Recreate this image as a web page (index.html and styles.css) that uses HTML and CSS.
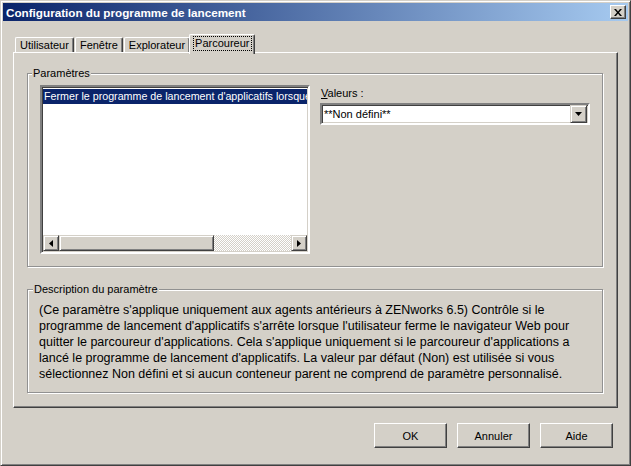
FILE: index.html
```html
<!DOCTYPE html>
<html lang="fr">
<head>
  <meta charset="UTF-8" />
  <title>Configuration du programme de lancement</title>
  <link rel="stylesheet" href="styles.css">
</head>
<body>
  <div class="window">
    <div class="titlebar">
      <span class="title">Configuration du programme de lancement</span>
      <span class="close">
        <svg width="8" height="7" viewBox="0 0 8 7"><path d="M0 0h2l2 2.5L6 0h2L5 3.5 8 7H6L4 4.5 2 7H0l3-3.5z" fill="#000"/></svg>
      </span>
    </div>

    <div class="client">
      <div class="tabs">
        <div class="tab">Utilisateur</div>
        <div class="tab">Fenêtre</div>
        <div class="tab">Explorateur</div>
        <div class="tab active"><span class="focus">Parcoureur</span></div>
      </div>

      <div class="panel">
        <fieldset class="group params">
          <legend>Paramètres</legend>
          <div class="params-row">
            <div class="listbox">
              <div class="list-items">
                <div class="item selected">Fermer le programme de lancement d'applicatifs lorsque</div>
              </div>
              <div class="hscroll">
                <span class="sbtn"><svg width="4" height="7" viewBox="0 0 4 7"><path d="M4 0v7L0 3.5z" fill="#000"/></svg></span>
                <span class="thumb"></span>
                <span class="track"></span>
                <span class="sbtn"><svg width="4" height="7" viewBox="0 0 4 7"><path d="M0 0v7l4-3.5z" fill="#000"/></svg></span>
              </div>
            </div>
            <div class="values">
              <label class="values-label">Valeurs :</label>
              <div class="combo">
                <span class="combo-text">**Non défini**</span>
                <span class="drop"><svg width="7" height="4" viewBox="0 0 7 4"><path d="M0 0h7L3.5 4z" fill="#000"/></svg></span>
              </div>
            </div>
          </div>
        </fieldset>

        <fieldset class="group desc">
          <legend>Description du paramètre</legend>
          <p class="desc-text">(Ce paramètre s'applique uniquement aux agents antérieurs à ZENworks 6.5) Contrôle si le<br>programme de lancement d'applicatifs s'arrête lorsque l'utilisateur ferme le navigateur Web pour<br>quitter le parcoureur d'applications. Cela s'applique uniquement si le parcoureur d'applications a<br>lancé le programme de lancement d'applicatifs. La valeur par défaut (Non) est utilisée si vous<br>sélectionnez Non défini et si aucun conteneur parent ne comprend de paramètre personnalisé.</p>
        </fieldset>
      </div>

      <div class="buttons">
        <button class="btn">OK</button>
        <button class="btn">Annuler</button>
        <button class="btn">Aide</button>
      </div>
    </div>
  </div>
</body>
</html>
```

FILE: styles.css
```css
body {
  margin: 0;
  background: #d4d0c8;
  font-family: "Liberation Sans", Arial, sans-serif;
  font-size: 11px;
  color: #000;
}
.window {
  width: 631px;
  height: 466px;
  box-sizing: border-box;
  border: 1px solid;
  border-color: #d4d0c8 #404040 #404040 #d4d0c8;
  box-shadow: inset 1px 1px #fff, inset -1px -1px #808080;
  padding: 2px;
  background: #d4d0c8;
}
.titlebar {
  height: 18px;
  display: flex;
  align-items: center;
  justify-content: space-between;
  padding: 0 2px 0 3px;
  background: linear-gradient(90deg, #0a246a, #a6caf0);
}
.title {
  color: #fff;
  font-weight: bold;
  font-size: 11.7px;
}
.close {
  width: 16px;
  height: 14px;
  box-sizing: border-box;
  display: flex;
  align-items: center;
  justify-content: center;
  background: #d4d0c8;
  border: 1px solid;
  border-color: #fff #404040 #404040 #fff;
  box-shadow: inset -1px -1px #808080;
}

.client {
  padding: 13px 10px 0 10px;
}
.tabs {
  display: flex;
  align-items: flex-end;
  height: 18px;
  padding-left: 2px;
}
.tab {
  height: 15px;
  box-sizing: border-box;
  padding: 0 4px;
  margin-right: 1px;
  line-height: 14px;
  border: 1px solid;
  border-bottom: none;
  border-color: #fff #404040 #404040 #fff;
  border-radius: 2px 2px 0 0;
  box-shadow: inset -1px 0 #808080;
}
.tab.active {
  position: relative;
  z-index: 1;
  height: 20px;
  margin: 0 -2px -2px -2px;
  padding: 2px 3px 0 4px;
  background: #d4d0c8;
  line-height: 13px;
}
.focus {
  display: inline-block;
  padding: 0 1px;
  outline: 1px dotted #000;
}

.panel {
  width: 605px;
  height: 356px;
  box-sizing: border-box;
  border: 1px solid;
  border-color: #fff #404040 #404040 #fff;
  box-shadow: inset -1px -1px #808080;
  padding: 14px 14px 0 13px;
  display: flex;
  flex-direction: column;
  gap: 16px;
}
.group {
  margin: 0;
  border: 1px solid #919191;
  box-shadow: inset 1px 1px #fff, 1px 1px #fff;
}
.group legend {
  margin-left: -8px;
  padding: 0 1px;
  line-height: 13px;
  background: #d4d0c8;
}
.desc legend {
  margin-left: -6px;
}
.params {
  height: 200px;
  box-sizing: border-box;
  padding: 5px 11px 12px 12px;
}
.params-row {
  display: flex;
  gap: 10px;
}

.listbox {
  width: 270px;
  height: 169px;
  box-sizing: border-box;
  border: 2px solid;
  border-color: #808080 #fff #fff #808080;
  box-shadow: inset 1px 1px #404040, inset -1px -1px #d4d0c8;
  background: #fff;
  display: flex;
  flex-direction: column;
  padding: 1px;
}
.list-items {
  flex: 1;
  overflow: hidden;
  padding-top: 1px;
}
.item {
  height: 15px;
  line-height: 15px;
  padding-left: 1px;
  font-size: 10.7px;
  white-space: nowrap;
  overflow: hidden;
}
.item.selected {
  background: #0a246a;
  color: #fff;
}
.hscroll {
  display: flex;
  height: 16px;
}
.sbtn, .thumb {
  box-sizing: border-box;
  border: 1px solid;
  border-color: #d4d0c8 #404040 #404040 #d4d0c8;
  box-shadow: inset 1px 1px #fff, inset -1px -1px #808080;
  background: #d4d0c8;
}
.sbtn {
  width: 16px;
  display: flex;
  align-items: center;
  justify-content: center;
}
.thumb {
  width: 155px;
}
.track {
  flex: 1;
  background: repeating-conic-gradient(#fff 0 25%, #d4d0c8 0 50%) 0 0 / 2px 2px;
}

.values {
  width: 270px;
}
.values-label {
  display: block;
  margin-top: 2px;
  line-height: 13px;
  padding-left: 1px;
}
.values-label::first-letter {
  text-decoration: underline;
}
.combo {
  margin-top: 3px;
  height: 22px;
  box-sizing: border-box;
  border: 2px solid;
  border-color: #808080 #fff #fff #808080;
  box-shadow: inset 1px 1px #404040, inset -1px -1px #d4d0c8;
  background: #fff;
  display: flex;
  align-items: center;
  justify-content: space-between;
  padding: 0 1px;
}
.combo-text {
  padding-left: 1px;
}
.drop {
  width: 17px;
  height: 18px;
  box-sizing: border-box;
  display: flex;
  align-items: center;
  justify-content: center;
  border: 1px solid;
  border-color: #d4d0c8 #404040 #404040 #d4d0c8;
  box-shadow: inset 1px 1px #fff, inset -1px -1px #808080;
  background: #d4d0c8;
}

.desc {
  height: 110px;
  box-sizing: border-box;
  padding: 6px 10px 10px 11px;
}
.desc-text {
  margin: 0;
  font-size: 12.5px;
  line-height: 16px;
  white-space: nowrap;
}

.buttons {
  display: flex;
  justify-content: flex-end;
  gap: 10px;
  padding: 15px 5px 0 0;
}
.btn {
  width: 73px;
  height: 25px;
  box-sizing: border-box;
  font-family: inherit;
  font-size: 11px;
  color: #000;
  background: #d4d0c8;
  border: 1px solid;
  border-color: #fff #404040 #404040 #fff;
  box-shadow: inset -1px -1px #808080;
  padding: 0;
}
```
